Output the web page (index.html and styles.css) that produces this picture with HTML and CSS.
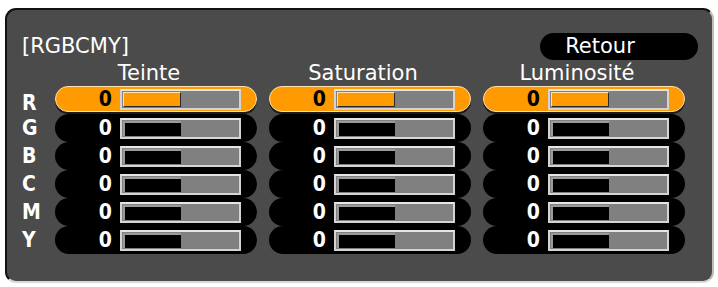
FILE: index.html
```html
<!DOCTYPE html>
<html lang="fr">
<head>
    <meta charset="UTF-8">
    <meta name="viewport" content="width=device-width, initial-scale=1.0">
    <title>RGBCMY</title>
    <link rel="stylesheet" href="styles.css">
</head>
<body>

<div class="panel">
    <div class="top">
        <div class="title">[RGBCMY]</div>
        <div class="back">Retour</div>
    </div>

    <div class="grid">
        <!-- en-tetes -->
        <div></div>
        <div class="head">Teinte</div>
        <div class="head">Saturation</div>
        <div class="head">Luminosité</div>

        <div class="label">R</div>
        <div class="cell active"><span class="val">0</span><span class="bar"><span class="fill"></span></span></div>
        <div class="cell active"><span class="val">0</span><span class="bar"><span class="fill"></span></span></div>
        <div class="cell active"><span class="val">0</span><span class="bar"><span class="fill"></span></span></div>

        <div class="label">G</div>
        <div class="cell"><span class="val">0</span><span class="bar"><span class="fill"></span></span></div>
        <div class="cell"><span class="val">0</span><span class="bar"><span class="fill"></span></span></div>
        <div class="cell"><span class="val">0</span><span class="bar"><span class="fill"></span></span></div>

        <div class="label">B</div>
        <div class="cell"><span class="val">0</span><span class="bar"><span class="fill"></span></span></div>
        <div class="cell"><span class="val">0</span><span class="bar"><span class="fill"></span></span></div>
        <div class="cell"><span class="val">0</span><span class="bar"><span class="fill"></span></span></div>

        <div class="label">C</div>
        <div class="cell"><span class="val">0</span><span class="bar"><span class="fill"></span></span></div>
        <div class="cell"><span class="val">0</span><span class="bar"><span class="fill"></span></span></div>
        <div class="cell"><span class="val">0</span><span class="bar"><span class="fill"></span></span></div>

        <div class="label">M</div>
        <div class="cell"><span class="val">0</span><span class="bar"><span class="fill"></span></span></div>
        <div class="cell"><span class="val">0</span><span class="bar"><span class="fill"></span></span></div>
        <div class="cell"><span class="val">0</span><span class="bar"><span class="fill"></span></span></div>

        <div class="label">Y</div>
        <div class="cell"><span class="val">0</span><span class="bar"><span class="fill"></span></span></div>
        <div class="cell"><span class="val">0</span><span class="bar"><span class="fill"></span></span></div>
        <div class="cell"><span class="val">0</span><span class="bar"><span class="fill"></span></span></div>
    </div>
</div>

</body>
</html>
```

FILE: styles.css
```css
body {
    margin: 0;
    background-color: #ffffff;
    font-family: "DejaVu Sans", sans-serif;
    color: #ffffff;
}

.panel {
    box-sizing: border-box;
    width: 709px;
    height: 275px;
    margin: 8px 0 0 5px;
    padding: 23px 0 0 15px;
    background-color: #4b4b4b;
    border: 2px solid #111111;
    border-right-color: #bdbdbd;
    border-bottom-color: #d8d8d8;
    border-radius: 11px;
}

.top {
    display: flex;
    justify-content: space-between;
    align-items: center;
    height: 27px;
}

.title {
    font-size: 21px;
    line-height: 27px;
}

.back {
    width: 158px;
    height: 27px;
    margin-right: 14px;
    padding-right: 38px;
    box-sizing: border-box;
    background-color: #000000;
    border-radius: 14px;
    font-size: 21px;
    line-height: 27px;
    text-align: center;
}

.grid {
    display: grid;
    grid-template-columns: 21px repeat(3, 202px);
    grid-auto-rows: 28px;
    grid-template-rows: 26px;
    column-gap: 12px;
}

.head {
    padding-right: 14px;
    font-size: 21px;
    line-height: 26px;
    text-align: center;
    margin-bottom: 3px;
}

.grid > .label:nth-child(5) {
    margin-top: 3px;
}

.label {
    font-family: "DejaVu Sans Condensed", "DejaVu Sans", sans-serif;
    font-weight: bold;
    font-size: 21px;
    line-height: 28px;
}

.cell {
    display: flex;
    align-items: center;
    height: 28px;
    background-color: #000000;
    border-radius: 14px;
}

.val {
    width: 57px;
    margin-right: 8px;
    font-family: "DejaVu Sans Condensed", "DejaVu Sans", sans-serif;
    font-weight: bold;
    font-size: 21px;
    text-align: right;
}

.bar {
    box-sizing: border-box;
    display: flex;
    width: 121px;
    height: 21px;
    padding: 1px;
    background-color: #808080;
    border: 2px solid #d4d4d4;
    border-top-color: #e6e6e6;
}

.fill {
    box-sizing: border-box;
    width: 58px;
    height: 100%;
    background-color: #000000;
    border-top: 2px solid #9a9a9a;
    border-left: 2px solid #9a9a9a;
}

.cell.active {
    box-sizing: border-box;
    height: 26px;
    background-color: #ff9a00;
    border: 1px solid #ffe2b0;
    box-shadow: 0 2px 0 #1a1a1a;
}

.cell.active .val {
    width: 56px;
    color: #000000;
}

.cell.active .fill {
    background-color: #ff9a00;
    border: 1px solid #2a2a2a;
    border-top-color: #ffe2b0;
    border-left-color: #ffe2b0;
}
```
